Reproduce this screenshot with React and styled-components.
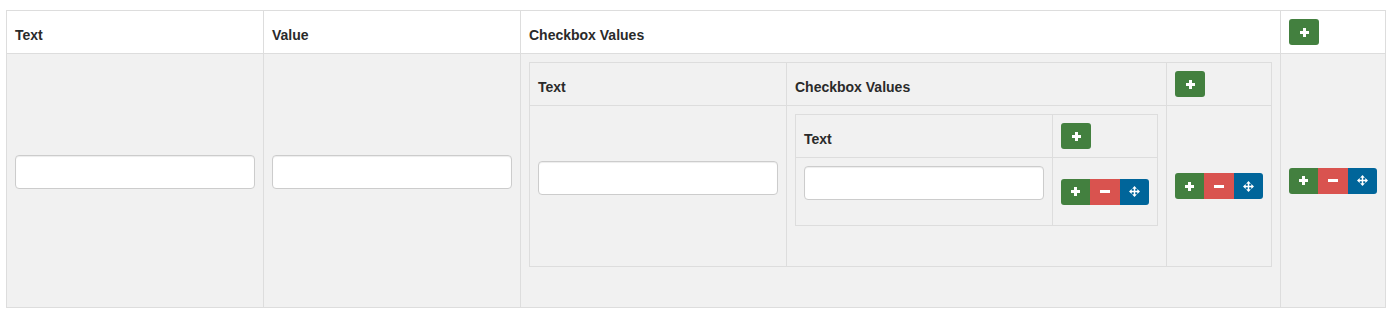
import React from "react";
import styled, { createGlobalStyle } from "styled-components";

const borderColor = "#dddddd";
const rowGrey = "#f1f1f1";

const GlobalStyle = createGlobalStyle`
  body {
    margin: 0;
    background: #ffffff;
    font-family: "Liberation Sans", Arial, Helvetica, sans-serif;
    font-size: 14px;
    line-height: 20px;
    color: #333333;
  }
  * {
    box-sizing: border-box;
  }
`;

const Page = styled.div`
  padding: 10px 12px 16px 6px;
`;

const Table = styled.div`
  display: grid;
  grid-template-columns: ${(p) => p.columns};
  border-top: 1px solid ${borderColor};
  border-left: 1px solid ${borderColor};
  flex: 1;
  min-width: 0;
  margin-bottom: ${(p) => (p.nested ? "32px" : "0")};
`;

const Cell = styled.div`
  display: flex;
  align-items: ${(p) => (p.top ? "flex-start" : "center")};
  padding: 8px;
  min-width: 0;
  border-right: 1px solid ${borderColor};
  border-bottom: 1px solid ${borderColor};
  background: ${(p) => p.bg || "transparent"};
`;

const HeadCell = styled(Cell)`
  align-items: flex-end;
  font-weight: bold;
  color: #2a2a2a;
`;

const Input = styled.input`
  display: block;
  width: 100%;
  height: 34px;
  margin: 0 0 17px;
  padding: 6px 12px;
  border: 1px solid #cccccc;
  border-radius: 4px;
  background: #ffffff;
  box-shadow: inset 0 1px 1px rgba(0, 0, 0, 0.075);
  font: inherit;
  color: #555555;
`;

const btnColors = {
  add: "#43803f",
  remove: "#d9534f",
  move: "#00659a",
};

const Btn = styled.button`
  display: flex;
  align-items: center;
  justify-content: center;
  width: ${(p) => (p.single ? "30px" : "29.33px")};
  height: 26px;
  padding: 0;
  border: none;
  border-radius: ${(p) => (p.single ? "3px" : "0")};
  background: ${(p) => btnColors[p.kind]};
  color: #ffffff;
  cursor: pointer;
`;

const BtnGroup = styled.div`
  display: flex;
  border-radius: 3px;
  overflow: hidden;
`;

const PlusIcon = () => (
  <svg width="9" height="9" viewBox="0 0 9 9" fill="#fff">
    <rect x="0" y="3" width="9" height="3" />
    <rect x="3" y="0" width="3" height="9" />
  </svg>
);

const MinusIcon = () => (
  <svg width="10" height="3" viewBox="0 0 10 3" fill="#fff">
    <rect x="0" y="0" width="10" height="3" />
  </svg>
);

const MoveIcon = () => (
  <svg width="11" height="11" viewBox="0 0 12 12" fill="#fff">
    <path d="M6 1.5V10.5M1.5 6H10.5" stroke="#fff" strokeWidth="1.6" />
    <polygon points="6,0 8.6,3 3.4,3" />
    <polygon points="6,12 8.6,9 3.4,9" />
    <polygon points="0,6 3,3.4 3,8.6" />
    <polygon points="12,6 9,3.4 9,8.6" />
  </svg>
);

const AddButton = () => (
  <Btn single kind="add">
    <PlusIcon />
  </Btn>
);

const RowActions = () => (
  <BtnGroup>
    <Btn kind="add">
      <PlusIcon />
    </Btn>
    <Btn kind="remove">
      <MinusIcon />
    </Btn>
    <Btn kind="move">
      <MoveIcon />
    </Btn>
  </BtnGroup>
);

const TextField = () => <Input type="text" />;

const InnerTable = () => (
  <Table nested columns="257px 1fr">
    <HeadCell>Text</HeadCell>
    <HeadCell>
      <AddButton />
    </HeadCell>
    <Cell top>
      <TextField />
    </Cell>
    <Cell>
      <RowActions />
    </Cell>
  </Table>
);

const MiddleTable = () => (
  <Table nested columns="257px 1fr 105px">
    <HeadCell>Text</HeadCell>
    <HeadCell>Checkbox Values</HeadCell>
    <HeadCell>
      <AddButton />
    </HeadCell>
    <Cell>
      <TextField />
    </Cell>
    <Cell top>
      <InnerTable />
    </Cell>
    <Cell>
      <RowActions />
    </Cell>
  </Table>
);

export default function App() {
  return (
    <>
      <GlobalStyle />
      <Page>
        <Table columns="257px 257px 1fr 105px">
          <HeadCell bg="#ffffff">Text</HeadCell>
          <HeadCell bg="#ffffff">Value</HeadCell>
          <HeadCell bg="#ffffff">Checkbox Values</HeadCell>
          <HeadCell bg="#ffffff">
            <AddButton />
          </HeadCell>
          <Cell bg={rowGrey}>
            <TextField />
          </Cell>
          <Cell bg={rowGrey}>
            <TextField />
          </Cell>
          <Cell bg={rowGrey} top>
            <MiddleTable />
          </Cell>
          <Cell bg={rowGrey}>
            <RowActions />
          </Cell>
        </Table>
      </Page>
    </>
  );
}
